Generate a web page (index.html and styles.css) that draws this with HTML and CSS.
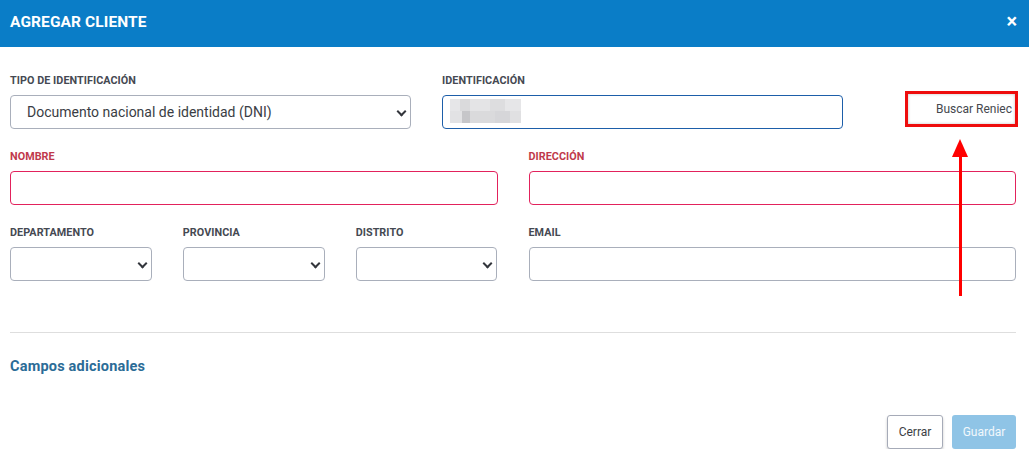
FILE: index.html
```html
<!DOCTYPE html>
<html>
<head>
    <meta charset="UTF-8">
    <title>Agregar cliente</title>
    <link rel="stylesheet" href="styles.css">
</head>
<body>
	<header class="modal-header">
		<h1>AGREGAR CLIENTE</h1>
		<span class="close">&times;</span>
	</header>
	<main class="modal-body">
		<div class="row">
			<div class="field col-5">
				<label>Tipo de identificación</label>
				<div class="select">Documento nacional de identidad (DNI)</div>
			</div>
			<div class="field col-5">
				<label>Identificación</label>
				<div class="input focus"><span class="blur"></span></div>
			</div>
			<div class="field col-2 reniec">
				<button class="btn-reniec">Buscar Reniec</button>
				<div class="arrow"></div>
			</div>
		</div>
		<div class="row">
			<div class="field col-6 error">
				<label>Nombre</label>
				<div class="input"></div>
			</div>
			<div class="field col-6 error">
				<label>Dirección</label>
				<div class="input"></div>
			</div>
		</div>
		<div class="row">
			<div class="col-6 sub">
				<div class="field">
					<label>Departamento</label>
					<div class="select"></div>
				</div>
				<div class="field">
					<label>Provincia</label>
					<div class="select"></div>
				</div>
				<div class="field">
					<label>Distrito</label>
					<div class="select"></div>
				</div>
			</div>
			<div class="field col-6">
				<label>Email</label>
				<div class="input"></div>
			</div>
		</div>
		<hr>
		<h2>Campos adicionales</h2>
		<footer class="actions">
			<button class="btn-close">Cerrar</button>
			<button class="btn-save">Guardar</button>
		</footer>
	</main>
</body>
</html>
```

FILE: styles.css
```css
body,h1,h2{
	margin: 0;
}
body{
	font-family: Roboto, "Liberation Sans", sans-serif;
	background: #fff;
	color: #3f434b;
}
.modal-header{
	height: 47px;
	background: #0a7dc7;
	color: #fff;
	display: flex;
	align-items: center;
	justify-content: space-between;
	padding: 0 12px 0 10px;
}
.modal-header h1{
	font-size: 15.5px;
	font-weight: 700;
	letter-spacing: 0.1px;
	padding-bottom: 4px;
}
.close{
	font-size: 20px;
	font-weight: 700;
	line-height: 1;
	padding-bottom: 6px;
}
.modal-body{
	padding: 27px 13px 0 10px;
}
.row{
	display: grid;
	grid-template-columns: repeat(12, 1fr);
	column-gap: 31px;
	margin-bottom: 21px;
}
.col-2{grid-column: span 2}
.col-5{grid-column: span 5}
.col-6{grid-column: span 6}
.sub{
	display: grid;
	grid-template-columns: repeat(3, 1fr);
	column-gap: 31px;
}
.field label{
	display: block;
	font-size: 10.8px;
	line-height: 13px;
	font-weight: 700;
	text-transform: uppercase;
	letter-spacing: 0.05px;
	color: #454952;
	margin-bottom: 8px;
}
.field.error label{
	color: #c0394b;
}
.input, .select{
	height: 34px;
	box-sizing: border-box;
	border: 1px solid #a9afbb;
	border-radius: 4px;
	background: #fff;
}
.field.error .input{
	border-color: #e2225c;
}
.input.focus{
	border-color: #1d5ea9;
	padding: 3px 0 0 7px;
}
.blur{
	display: block;
	width: 71px;
	height: 24px;
	background:
		linear-gradient(90deg, #e6e6e8 0 10px, #dadadc 10px 20px, #e4e4e6 20px 40px, #dddddf 40px 55px, #e6e6e8 55px) top / 100% 50% no-repeat,
		linear-gradient(90deg, #e2e2e4 0 12px, #c6c6c9 12px 20px, #dadadc 20px 45px, #d6d6d9 45px 60px, #e0e0e2 60px) bottom / 100% 50% no-repeat;
}
.select{
	position: relative;
	font-size: 14px;
	line-height: 32px;
	padding-left: 16px;
	color: #3a3d44;
}
.select:after{
	content: "";
	position: absolute;
	right: 5px;
	top: 12px;
	width: 5px;
	height: 5px;
	border-right: 2px solid #33363c;
	border-bottom: 2px solid #33363c;
	transform: rotate(45deg);
}
.reniec{
	position: relative;
	display: flex;
	justify-content: flex-end;
	align-items: flex-start;
	padding-top: 17px;
}
.btn-reniec{
	width: 113px;
	height: 36px;
	box-sizing: border-box;
	border: 3px solid #ee0d0d;
	background: #fff;
	box-shadow: inset 0 0 3px rgba(0,0,0,0.25);
	font-family: inherit;
	font-size: 12px;
	color: #45484e;
	text-align: right;
	padding: 0 3px 0 0;
	margin-right: -2px;
}
.arrow{
	position: absolute;
	left: 85px;
	top: 80px;
	width: 3px;
	height: 142px;
	background: #f00;
}
.arrow:before{
	content: "";
	position: absolute;
	left: -7px;
	top: -15px;
	border-left: 8.5px solid transparent;
	border-right: 8.5px solid transparent;
	border-bottom: 18px solid #f00;
}
hr{
	border: 0;
	border-top: 1px solid #dedede;
	margin: 51px 0 0 0;
}
h2{
	font-size: 14.5px;
	font-weight: 700;
	color: #2b6c97;
	margin-top: 25px;
	letter-spacing: 0.2px;
}
.actions{
	display: flex;
	justify-content: flex-end;
	gap: 9px;
	margin-top: 40px;
}
.actions button{
	height: 34px;
	box-sizing: border-box;
	border-radius: 3px;
	font-family: inherit;
	font-size: 12px;
}
.btn-close{
	width: 56px;
	border: 1px solid #a6abb8;
	background: #fff;
	color: #3b3e45;
	box-shadow: 0 2px 3px rgba(0,0,0,0.2);
}
.btn-save{
	width: 64px;
	border: 0;
	background: #8fc4e6;
	color: #f2f8fc;
}
```
